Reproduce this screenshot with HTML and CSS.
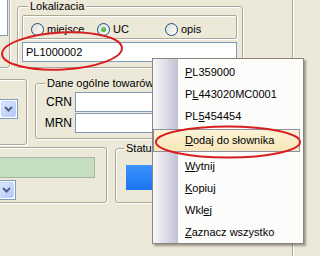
FILE: index.html
```html
<!DOCTYPE html>
<html lang="pl">
<head>
    <meta charset="UTF-8">
    <title>Lokalizacja</title>
    <link rel="stylesheet" href="styles.css">
</head>
<body>

<div class="screen">
    <div class="form">
        <div class="row row-top">
            <div class="grp stub-a"><div class="list"></div></div>
            <fieldset class="grp loc">
                <legend>Lokalizacia</legend>
                <div class="radios">
                    <label class="opt opt-a"><span class="radio"></span>miejsce</label>
                    <label class="opt opt-b"><span class="radio on"></span>UC</label>
                    <label class="opt"><span class="radio"></span>opis</label>
                </div>
                <div class="edit loc-edit">PL1000002</div>
            </fieldset>
        </div>

        <div class="row row-mid">
            <div class="grp stub-b">
                <div class="combo combo-a">
                    <span class="drop"><svg width="9" height="6" viewBox="0 0 9 6"><path d="M1 1 L4.5 4.5 L8 1" fill="none" stroke="#4D6185" stroke-width="2"/></svg></span>
                </div>
            </div>
            <fieldset class="grp dane">
                <legend>Dane ogólne towarów</legend>
                <div class="pair"><span class="lbl">CRN</span><div class="edit"></div></div>
                <div class="pair"><span class="lbl">MRN</span><div class="edit"></div></div>
            </fieldset>
        </div>

        <div class="row row-low">
            <div class="grp stub-c">
                <div class="green"></div>
                <div class="combo combo-b">
                    <span class="drop"><svg width="9" height="6" viewBox="0 0 9 6"><path d="M1 1 L4.5 4.5 L8 1" fill="none" stroke="#4D6185" stroke-width="2"/></svg></span>
                </div>
            </div>
            <fieldset class="grp status">
                <legend>Status</legend>
                <div class="bar"></div>
            </fieldset>
        </div>
    </div>
    <div class="side"></div>
</div>

<!-- menu kontekstowe pola lokalizacji -->
<div class="menu">
    <div class="item"><u>P</u>L359000</div>
    <div class="item">P<u>L</u>443020MC0001</div>
    <div class="item">PL<u>5</u>454454</div>
    <div class="sep sep-a"></div>
    <div class="item hot"><u>D</u>odaj do słownika</div>
    <div class="sep"></div>
    <div class="item"><u>W</u>ytnij</div>
    <div class="item"><u>K</u>opiuj</div>
    <div class="item">Wkl<u>e</u>j</div>
    <div class="item"><u>Z</u>aznacz wszystko</div>
</div>

<svg class="marks" width="320" height="256" viewBox="0 0 320 256">
    <ellipse cx="62" cy="51" rx="60" ry="18.5" transform="rotate(-3 62 51)" fill="none" stroke="#D81E1E" stroke-width="2"/>
    <ellipse cx="228" cy="142" rx="72" ry="15.5" fill="none" stroke="#D81E1E" stroke-width="2"/>
</svg>

</body>
</html>
```

FILE: styles.css
```css
body {
    margin: 0;
    width: 320px;
    height: 256px;
    overflow: hidden;
    position: relative;
    background-color: #ECE9D8;
    font-family: "Liberation Sans", Arial, sans-serif;
    font-size: 11px;
    color: #000;
}
.screen {
    display: flex;
    height: 256px;
}
.form {
    width: 292px;
    flex-shrink: 0;
}
.side {
    flex: 1;
    border-left: 1px solid #ACA899;
    box-shadow: inset 1px 0 0 #fff;
}
.row {
    display: flex;
    align-items: flex-start;
}
.row-top {
    height: 72px;
}
.row-mid {
    height: 75px;
}

/* ramki grup */
.grp {
    box-sizing: border-box;
    border: 1px solid #ACA899;
    border-radius: 3px;
    box-shadow: inset 1px 1px 0 #fff, 1px 1px 0 #fff;
    margin: 0;
    padding: 0;
    min-width: 0;
    flex-shrink: 0;
}
legend {
    padding: 0 2px;
    line-height: 12px;
    background-color: #ECE9D8;
}
.edit {
    box-sizing: border-box;
    background-color: #fff;
    border: 1px solid #7F9DB9;
    height: 20px;
    line-height: 18px;
    padding-left: 3px;
}

.stub-a {
    margin: -10px 0 0 -20px;
    width: 30px;
    height: 78px;
}
.list {
    box-sizing: border-box;
    margin: 6px 0 0 16px;
    width: 11px;
    height: 39px;
    background-color: #fff;
    border: 1px solid #7F9DB9;
}

.loc {
    margin-left: 7px;
    width: 226px;
    height: 68px;
    padding: 0 4px;
}
.loc legend {
    margin-left: 6px;
}
.radios {
    box-sizing: border-box;
    margin-top: 3px;
    width: 215px;
    height: 24px;
    border: 1px solid #ACA899;
    border-radius: 2px;
    box-shadow: inset 1px 1px 0 #fff, 1px 1px 0 #fff;
    display: flex;
    align-items: center;
    padding: 4px 0 0 8px;
}
.opt {
    display: flex;
    align-items: center;
    gap: 3px;
}
.opt-a {
    width: 66px;
}
.opt-b {
    width: 68px;
}
.radio {
    box-sizing: border-box;
    width: 13px;
    height: 13px;
    border: 1px solid #1C5180;
    border-radius: 50%;
    background: linear-gradient(135deg, #DCDBD3, #fff);
    display: flex;
    align-items: center;
    justify-content: center;
}
.radio.on::after {
    content: "";
    width: 5px;
    height: 5px;
    border-radius: 50%;
    background: radial-gradient(circle at 35% 35%, #7BD67B, #21A121);
}
.loc-edit {
    margin-top: 3px;
    width: 215px;
}

.stub-b {
    margin: 7px 0 0 -20px;
    width: 47px;
    height: 66px;
}
.combo {
    box-sizing: border-box;
    height: 20px;
    background-color: #fff;
    border: 1px solid #7F9DB9;
    display: flex;
    justify-content: flex-end;
    padding: 1px;
}
.combo-a {
    margin: 19px 0 0 -21px;
    width: 58px;
}
.drop {
    box-sizing: border-box;
    width: 15px;
    height: 16px;
    border: 1px solid #C3D3FD;
    border-radius: 2px;
    background: linear-gradient(135deg, #E0E8FE, #B3C7F7);
    display: flex;
    align-items: center;
    justify-content: center;
}

.dane {
    margin: 5px 0 0 8px;
    width: 250px;
    height: 62px;
    padding: 3px 6px 0 1px;
}
.dane legend {
    margin-left: 8px;
}
.pair {
    display: flex;
    align-items: center;
    margin-bottom: 1px;
}
.lbl {
    width: 35px;
    margin-right: 3px;
    text-align: right;
    font-size: 12px;
}
.pair .edit {
    flex: 1;
}

.stub-c {
    margin-left: -20px;
    width: 127px;
    height: 56px;
}
.green {
    box-sizing: border-box;
    margin: 9px 0 0 16px;
    width: 98px;
    height: 21px;
    background-color: #C5DEC1;
    border: 1px solid #A6B6A2;
}
.combo-b {
    margin: 2px 0 0 -21px;
    width: 56px;
}

.status {
    margin: -5px 0 0 8px;
    width: 170px;
    height: 61px;
}
.status legend {
    margin-left: 8px;
}
.bar {
    margin: 11px 0 0 10px;
    width: 150px;
    height: 25px;
    background: linear-gradient(#3B93FB, #1A74F2);
}

/* menu kontekstowe */
.menu {
    position: absolute;
    left: 152px;
    top: 58px;
    width: 152px;
    box-sizing: border-box;
    border: 1px solid #8A867A;
    padding-top: 2px;
    background: linear-gradient(to right, #F8F8FA, #C2C1D5) 0 0 / 25px 100% no-repeat, #FCFCFA;
    box-shadow: 2px 2px 2px rgba(0, 0, 0, 0.35);
}
.item {
    height: 22px;
    line-height: 22px;
    padding-left: 32px;
    white-space: nowrap;
}
.sep {
    height: 3px;
}
.sep-a {
    height: 2px;
}
.item.hot {
    height: 23px;
    line-height: 21px;
    margin-right: 3px;
    padding-left: 31px;
    box-sizing: border-box;
    border: 1px solid #8F90A8;
    background: linear-gradient(#FCF3D6, #F7E6B8);
}
.marks {
    position: absolute;
    left: 0;
    top: 0;
    pointer-events: none;
}
```
